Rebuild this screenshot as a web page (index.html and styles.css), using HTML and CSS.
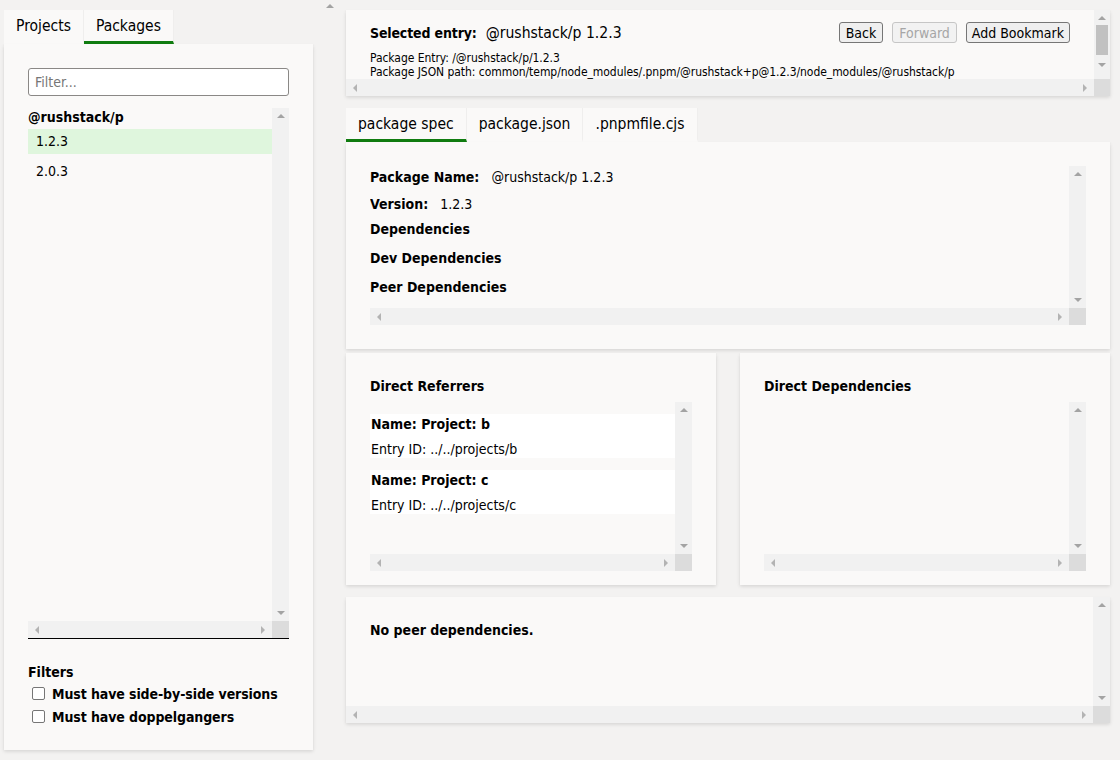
FILE: index.html
```html
<!DOCTYPE html>
<html>
<head>
<meta charset="utf-8">
<title>Lockfile Explorer</title>
<link rel="stylesheet" href="styles.css">
</head>
<body>
<div class="app">
  <aside class="left">
    <div class="tabs">
      <div class="tab">Projects</div>
      <div class="tab active">Packages</div>
    </div>
    <div class="card left-card">
      <input class="filter" type="text" placeholder="Filter...">
      <div class="scroll list-scroll">
        <div class="scroll-content">
          <div class="group">@rushstack/p</div>
          <div class="item selected">1.2.3</div>
          <div class="item">2.0.3</div>
        </div>
        <div class="vbar"><span class="arr up"></span><span class="arr down"></span></div>
        <div class="hbar"><span class="arr lt"></span><span class="arr rt"></span></div>
        <div class="corner"></div>
      </div>
      <div class="filters">
        <div class="filters-title">Filters</div>
        <label class="check"><span class="box"></span>Must have side-by-side versions</label>
        <label class="check"><span class="box"></span>Must have doppelgangers</label>
      </div>
    </div>
  </aside>
  <div class="gutter"><span class="arr up"></span></div>
  <main class="right">
    <section class="card scroll header-card">
      <div class="scroll-content header-content">
        <div class="header-row">
          <div class="selected"><span class="sel-label">Selected entry:</span><span class="sel-value">@rushstack/p 1.2.3</span></div>
          <div class="buttons">
            <button class="btn">Back</button>
            <button class="btn" disabled>Forward</button>
            <button class="btn bookmark">Add Bookmark</button>
          </div>
        </div>
        <div class="small">Package Entry: /@rushstack/p/1.2.3</div>
        <div class="small">Package JSON path: common/temp/node_modules/.pnpm/@rushstack+p@1.2.3/node_modules/@rushstack/p</div>
      </div>
      <div class="vbar thumbbar"><span class="arr up"></span><span class="thumb"></span><span class="arr down"></span></div>
      <div class="hbar"><span class="arr lt"></span><span class="arr rt"></span></div>
      <div class="corner"></div>
    </section>

    <div class="tabs spec-tabs">
      <div class="tab active">package spec</div>
      <div class="tab">package.json</div>
      <div class="tab">.pnpmfile.cjs</div>
    </div>
    <section class="card spec-card">
      <div class="scroll spec-scroll">
        <div class="scroll-content spec-content">
          <div class="kv r1"><span class="k">Package Name:</span><span class="v">@rushstack/p 1.2.3</span></div>
          <div class="kv r2"><span class="k">Version:</span><span class="v">1.2.3</span></div>
          <div class="sub r3">Dependencies</div>
          <div class="sub r4">Dev Dependencies</div>
          <div class="sub r5">Peer Dependencies</div>
        </div>
        <div class="vbar"><span class="arr up"></span><span class="arr down"></span></div>
        <div class="hbar"><span class="arr lt"></span><span class="arr rt"></span></div>
        <div class="corner"></div>
      </div>
    </section>

    <div class="row2">
      <section class="card half">
        <h3 class="half-title">Direct Referrers</h3>
        <div class="scroll half-scroll">
          <div class="scroll-content ref-content">
            <div class="ref">
              <div class="ref-name">Name: Project: b</div>
              <div class="ref-id">Entry ID: ../../projects/b</div>
            </div>
            <div class="ref">
              <div class="ref-name">Name: Project: c</div>
              <div class="ref-id">Entry ID: ../../projects/c</div>
            </div>
          </div>
          <div class="vbar"><span class="arr up"></span><span class="arr down"></span></div>
          <div class="hbar"><span class="arr lt"></span><span class="arr rt"></span></div>
          <div class="corner"></div>
        </div>
      </section>
      <section class="card half">
        <h3 class="half-title">Direct Dependencies</h3>
        <div class="scroll half-scroll">
          <div class="scroll-content"></div>
          <div class="vbar"><span class="arr up"></span><span class="arr down"></span></div>
          <div class="hbar"><span class="arr lt"></span><span class="arr rt"></span></div>
          <div class="corner"></div>
        </div>
      </section>
    </div>

    <section class="card scroll peer-card">
      <div class="scroll-content peer-content">
        <div class="peer-text">No peer dependencies.</div>
      </div>
      <div class="vbar"><span class="arr up"></span><span class="arr down"></span></div>
      <div class="hbar"><span class="arr lt"></span><span class="arr rt"></span></div>
      <div class="corner"></div>
    </section>
  </main>
</div>
</body>
</html>
```

FILE: styles.css
```css
* { box-sizing: border-box; }
html, body { margin: 0; padding: 0; }
body {
  background: #f3f2f1;
  font-family: "DejaVu Sans Condensed", "DejaVu Sans", sans-serif;
  font-size: 14px;
  color: #000;
  width: 1120px;
  height: 760px;
  overflow: hidden;
}
.app {
  display: flex;
  padding: 10px 10px 0 4px;
}

/* ---------- cards ---------- */
.card {
  background: #faf9f8;
  box-shadow: 0 1.6px 3.6px 0 rgba(0,0,0,0.13), 0 0.3px 0.9px 0 rgba(0,0,0,0.11);
}

/* ---------- tabs ---------- */
.tabs { display: flex; height: 34px; }
.tab {
  padding: 0 12px;
  font-size: 15.5px;
  line-height: 32px;
  background: #faf9f8;
  border-bottom: 3px solid transparent;
  border-right: 1px solid #efeeed;
}
.tab.active { border-bottom-color: #107c10; }

/* ---------- fake scroll containers ---------- */
.scroll {
  display: grid;
  grid-template-columns: 1fr 17px;
  grid-template-rows: 1fr 17px;
  overflow: hidden;
}
.scroll-content { overflow: hidden; min-width: 0; min-height: 0; }
.vbar {
  background: #f1f1f1;
  display: flex;
  flex-direction: column;
  align-items: center;
  justify-content: space-between;
  padding: 6px 0 6px;
}
.hbar {
  background: #f1f1f1;
  display: flex;
  align-items: center;
  justify-content: space-between;
  padding: 0 7px 0 7px;
}
.corner { background: #dcdcdc; }
.arr { display: block; width: 0; height: 0; }
.arr.up { border-left: 4px solid transparent; border-right: 4px solid transparent; border-bottom: 4px solid #a3a3a3; }
.arr.down { border-left: 4px solid transparent; border-right: 4px solid transparent; border-top: 4px solid #a3a3a3; }
.arr.lt { border-top: 4px solid transparent; border-bottom: 4px solid transparent; border-right: 4px solid #b3b3b3; }
.arr.rt { border-top: 4px solid transparent; border-bottom: 4px solid transparent; border-left: 4px solid #b3b3b3; }

/* ---------- left pane ---------- */
.left { width: 309px; display: flex; flex-direction: column; }
.left-card {
  height: 706px;
  padding: 24px 24px 22px;
  display: flex;
  flex-direction: column;
}
.filter {
  height: 28px;
  width: 100%;
  border: 1px solid #8a8886;
  border-radius: 3px;
  background: #fff;
  padding: 0 6px;
  font-family: inherit;
  font-size: 14px;
  outline: none;
}
.filter::placeholder { color: #767676; }
.list-scroll {
  margin-top: 12px;
  flex: 1;
  border-bottom: 1px solid #000;
}
.group {
  font-weight: bold;
  font-size: 14px;
  line-height: 18px;
  height: 21px;
}
.item {
  height: 25px;
  line-height: 25px;
  padding-left: 8px;
  font-size: 14px;
}
.item.selected { background: #dff6dd; }
.item + .item { margin-top: 5px; }
.filters { margin-top: 23px; }
.filters-title { font-weight: bold; font-size: 14px; line-height: 20px; height: 20px; }
.check {
  display: flex;
  align-items: center;
  height: 23px;
  font-weight: bold;
  font-size: 14px;
  letter-spacing: -0.1px;
}
.box {
  width: 13px; height: 13px;
  border: 1px solid #767676;
  border-radius: 2px;
  background: #fff;
  margin: 0 7px 0 4px;
}

.gutter { width: 33px; display: flex; justify-content: center; margin-top: -6px; }

/* ---------- right pane ---------- */
.right { width: 764px; display: flex; flex-direction: column; }

.header-card {
  height: 86px;
  grid-template-columns: 1fr 16px;
}
.header-content { padding: 12px 24px 0 24px; }
.header-row { display: flex; align-items: center; height: 21px; margin-bottom: 8px; }
.sel-label { font-weight: bold; font-size: 14px; letter-spacing: -0.15px; margin-right: 9px; }
.sel-value { font-size: 15.6px; }
.buttons { margin-left: auto; display: flex; gap: 9px; }
.btn {
  height: 21px;
  padding: 0 6px;
  font-family: inherit;
  font-size: 14px;
  background: #efefef;
  border: 1px solid #767676;
  border-radius: 3px;
  color: #000;
}
.btn.bookmark { padding: 0 5px; }
.btn:disabled { color: #a6a6a6; border-color: #c6c6c6; background: #f2f2f2; }
.small { font-size: 12px; line-height: 14px; white-space: nowrap; letter-spacing: -0.05px; }
.thumbbar { justify-content: flex-start; padding: 6px 0 0; }
.thumbbar .thumb { width: 12px; height: 30px; background: #c1c1c1; margin: 5px 0 8px; }

.spec-tabs { margin-top: 12px; }
.spec-card { height: 207px; padding: 24px; }
.spec-scroll { height: 159px; }
.kv, .sub { height: 22px; line-height: 22px; white-space: nowrap; }
.k { font-weight: bold; font-size: 14px; margin-right: 12px; }
.v { font-size: 14px; }
.sub { font-weight: bold; font-size: 14px; }
.r2 { margin-top: 5px; }
.r3 { margin-top: 3px; }
.r4 { margin-top: 7px; }
.r5 { margin-top: 7px; }

.row2 { display: flex; gap: 24px; margin-top: 4px; }
.half { width: 370px; height: 232px; padding: 24px 24px 14px; display: flex; flex-direction: column; }
.half-title { margin: 0 0 7px; font-size: 14px; line-height: 18px; font-weight: bold; }
.half-scroll { flex: 1; }
.ref-content { padding-top: 12px; }
.ref { background: #fff; height: 44px; padding-left: 1px; }
.ref + .ref { margin-top: 12px; }
.ref-name { font-weight: bold; font-size: 14px; line-height: 20px; height: 20px; }
.ref-id { font-size: 14px; line-height: 20px; padding-top: 5px; }

.peer-card { height: 126px; margin-top: 12px; }
.peer-content { padding: 24px; }
.peer-text { font-weight: bold; font-size: 14px; line-height: 18px; }
```
